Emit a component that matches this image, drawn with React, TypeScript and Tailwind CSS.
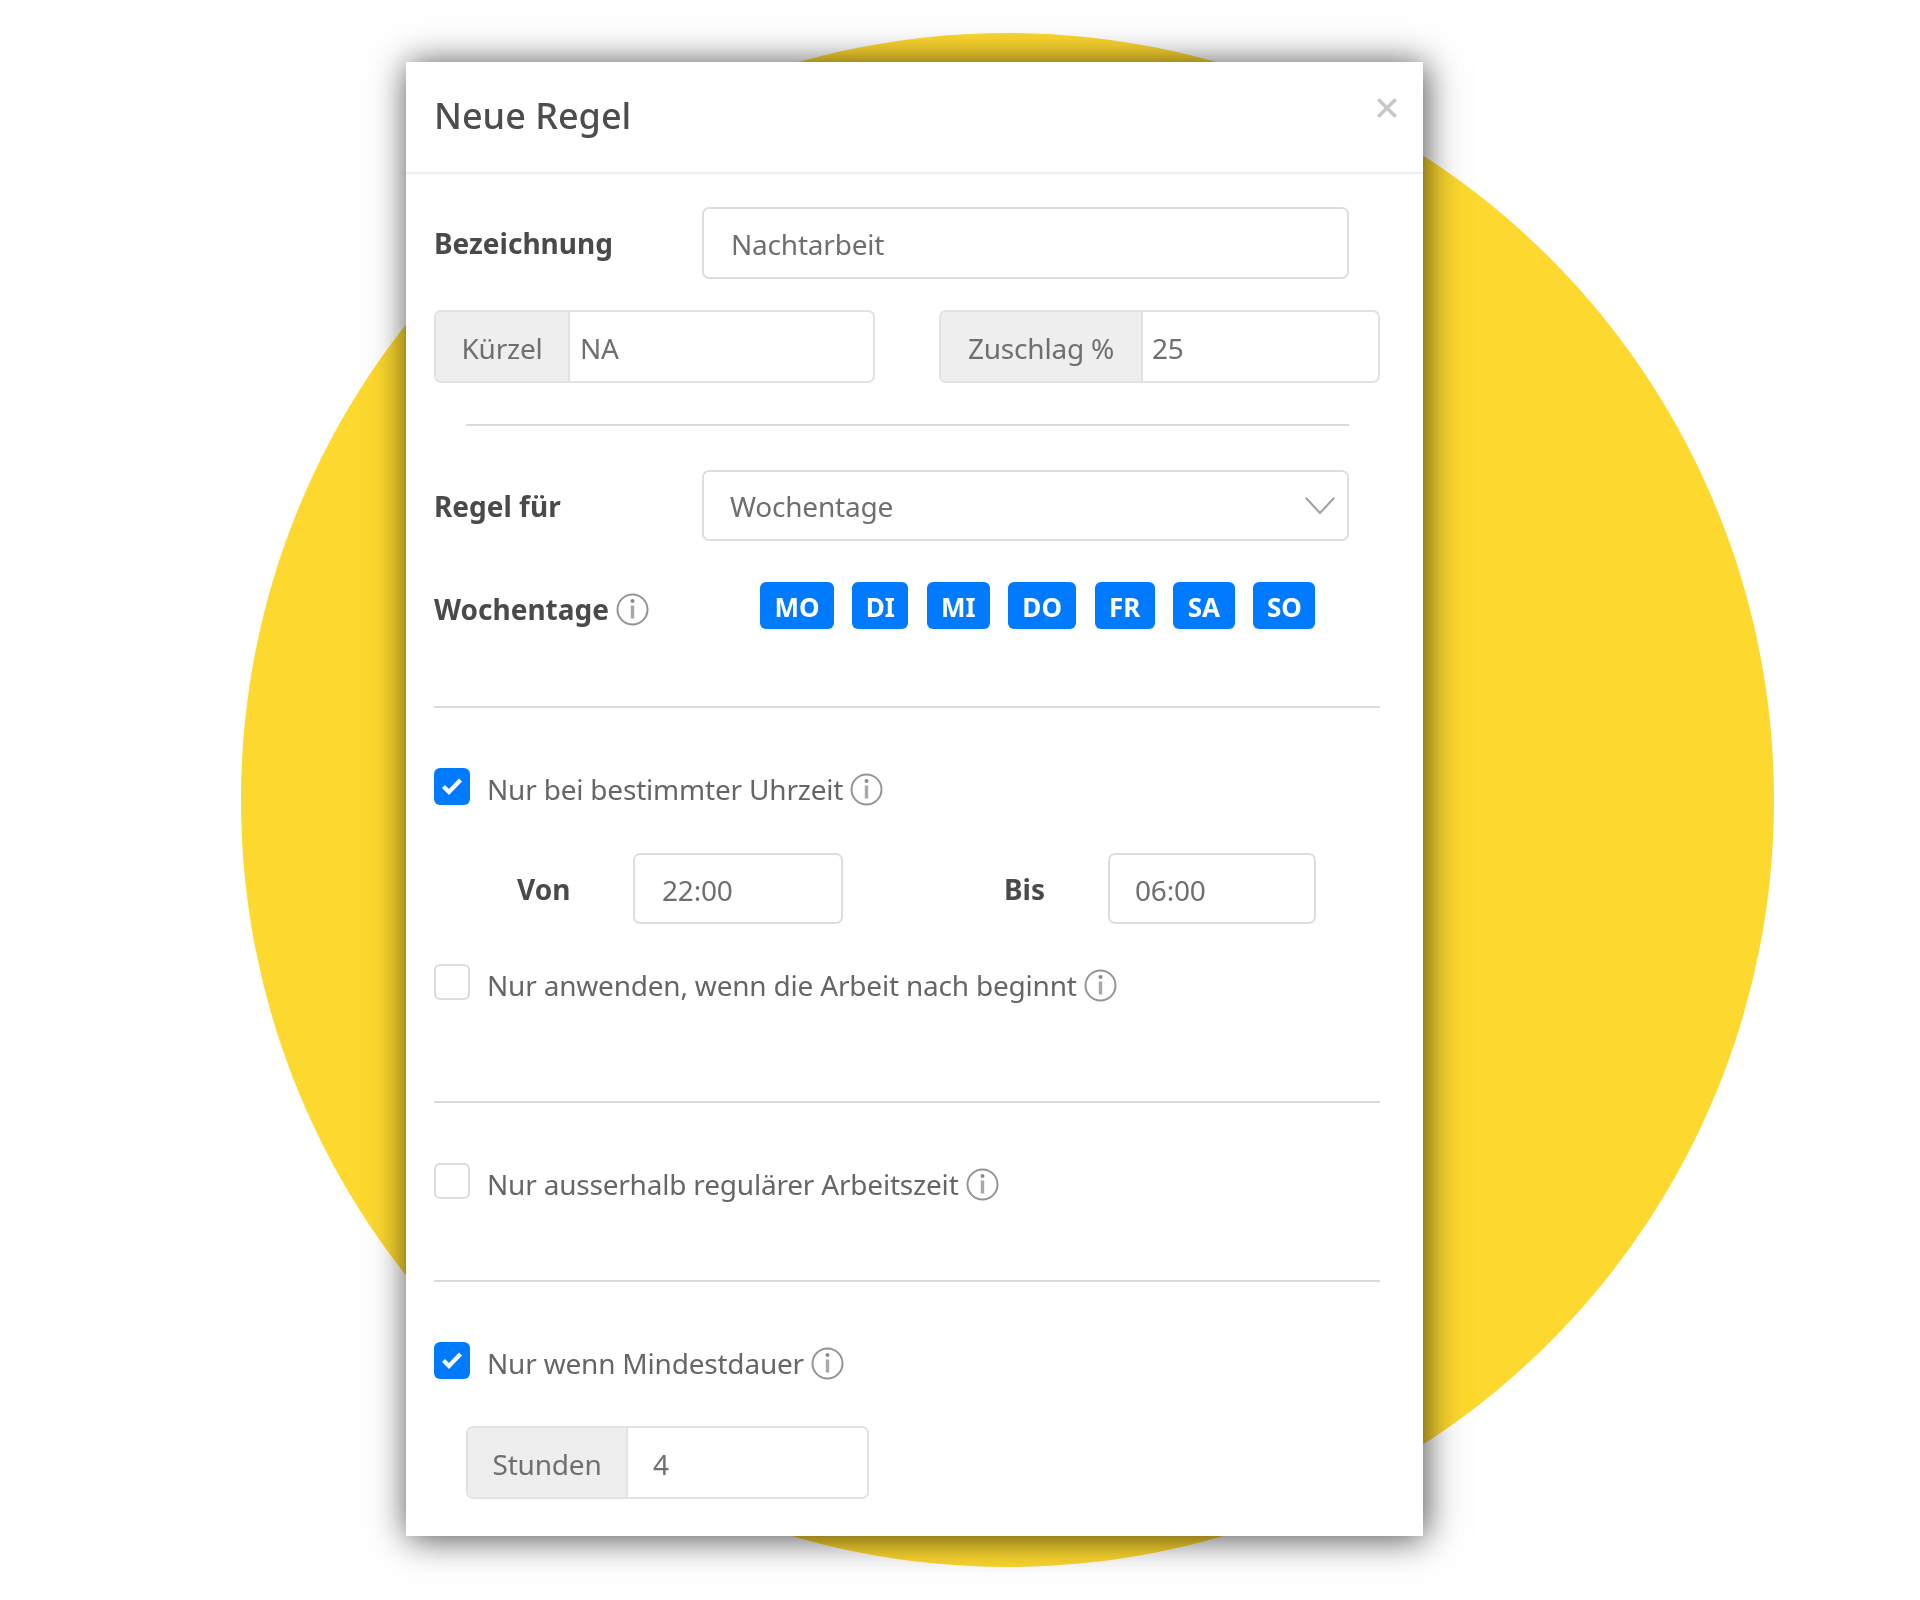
import type { ReactNode } from 'react';

const days = [
  { label: 'MO', width: 'w-[74px]' },
  { label: 'DI', width: 'w-[56px]' },
  { label: 'MI', width: 'w-[63px]' },
  { label: 'DO', width: 'w-[68px]' },
  { label: 'FR', width: 'w-[60px]' },
  { label: 'SA', width: 'w-[62px]' },
  { label: 'SO', width: 'w-[62px]' },
];

function InfoIcon() {
  return (
    <svg viewBox="0 0 33 33" className="w-[33px] h-[33px] shrink-0 ml-[7px]" fill="none" stroke="#949494">
      <circle cx="16.5" cy="16.5" r="15" strokeWidth="2" />
      <circle cx="16.5" cy="8" r="2" fill="#8a8a8a" stroke="none" />
      <path d="M16.5 12.5v13" strokeWidth="3.4" stroke="#a8a8a8" />
    </svg>
  );
}

function Check({ on, label }: { on?: boolean; label: string }) {
  return (
    <div className="flex items-center h-[36px]">
      {on ? (
        <div className="w-[36px] h-[37px] rounded-[6px] bg-[#007bff] flex items-center justify-center">
          <svg viewBox="0 0 22 22" className="w-[22px] h-[22px]" fill="none" stroke="#fff" strokeWidth="4.2">
            <path d="M2.5 11.5l5.5 5.5L19.5 5" />
          </svg>
        </div>
      ) : (
        <div className="w-[36px] h-[36px] rounded-[6px] border-2 border-[#dcdcdc] bg-white" />
      )}
      <span className="ml-[17px] text-[28px] tracking-[-0.2px] text-[#666] relative top-[3px]">{label}</span>
      <span className="relative top-[3px]">
        <InfoIcon />
      </span>
    </div>
  );
}

function Field({ children, className }: { children: ReactNode; className: string }) {
  return (
    <div className={`flex items-center rounded-[7px] border-2 border-[#dedede] text-[28px] tracking-[-0.2px] text-[#6f6f6f] ${className}`}>
      {children}
    </div>
  );
}

function Group({ addon, value, className, addonWidth, valuePad }: { addon: string; value: string; className: string; addonWidth: string; valuePad: string }) {
  return (
    <div className={`flex rounded-[7px] border-2 border-[#e2e2e2] text-[28px] tracking-[-0.2px] text-[#6f6f6f] overflow-hidden ${className}`}>
      <div className={`flex items-center justify-center pt-[3px] bg-[#eeeeee] border-r-2 border-[#e2e2e2] ${addonWidth}`}>{addon}</div>
      <div className={`flex items-center pt-[3px] ${valuePad}`}>{value}</div>
    </div>
  );
}

function Divider({ className }: { className: string }) {
  return <div className={`h-[2px] bg-[#dadada] ${className}`} />;
}

export default function App() {
  return (
    <div className="relative w-full h-[1600px] bg-white overflow-hidden font-['Noto_Sans',sans-serif] pt-[62px] pl-[406px]">
      <div className="absolute left-[241px] top-[33px] w-[1533px] h-[1534px] rounded-full bg-[#fdd82e]" />

      <div className="relative w-[1017px] h-[1474px] bg-white shadow-[2px_2px_34px_rgba(0,0,0,0.72)]">
        <div className="relative h-[112px] border-b-2 border-[#efefef] px-[28px] flex items-center">
          <h2 className="text-[36px] font-medium text-[#4d4d4d] relative top-[-1px] blur-[0.7px]">Neue Regel</h2>
          <svg viewBox="0 0 20 20" className="absolute right-[25px] top-[35px] w-[22px] h-[22px] blur-[0.7px]" stroke="#c9c9c9" strokeWidth="3.4">
            <path d="M2 2l16 16M18 2L2 18" />
          </svg>
        </div>

        <div className="pl-[28px] pt-[33px] blur-[0.7px]">
          <div className="flex items-center">
            <label className="w-[268px] text-[28px] font-bold text-[#4a4a4a]">Bezeichnung</label>
            <Field className="w-[647px] h-[72px] pl-[27px] pt-[2px]">Nachtarbeit</Field>
          </div>

          <div className="flex mt-[31px] gap-[64px]">
            <Group addon="Kürzel" value="NA" className="w-[441px] h-[73px]" addonWidth="w-[134px]" valuePad="pl-[10px]" />
            <Group addon="Zuschlag %" value="25" className="w-[441px] h-[73px]" addonWidth="w-[202px]" valuePad="pl-[9px]" />
          </div>

          <Divider className="w-[883px] ml-[32px] mt-[41px]" />

          <div className="flex items-center mt-[44px]">
            <label className="w-[268px] text-[28px] font-bold text-[#4a4a4a]">Regel für</label>
            <Field className="w-[647px] h-[71px] pl-[26px] pr-[12px] justify-between">
              <span className="pt-[1px]">Wochentage</span>
              <svg viewBox="0 0 30 18" className="w-[30px] h-[18px]" fill="none" stroke="#a0a0a0" strokeWidth="2">
                <path d="M1 1l14 15L29 1" />
              </svg>
            </Field>
          </div>

          <div className="flex items-start mt-[41px]">
            <div className="w-[326px] flex items-center text-[28px] font-bold text-[#4a4a4a] pt-[6px]">
              <span>Wochentage</span>
              <InfoIcon />
            </div>
            <div className="flex gap-[18.4px]">
              {days.map((day) => (
                <div key={day.label} className={`h-[47px] pt-[3px] rounded-[6px] bg-[#007bff] text-white text-[26px] font-bold flex items-center justify-center ${day.width}`}>
                  {day.label}
                </div>
              ))}
            </div>
          </div>

          <Divider className="w-[946px] mt-[76px]" />

          <div className="mt-[60px]">
            <Check on label="Nur bei bestimmter Uhrzeit" />
          </div>

          <div className="flex items-center mt-[49px] pl-[83px]">
            <label className="w-[116px] text-[28px] font-bold text-[#4a4a4a]">Von</label>
            <Field className="w-[210px] h-[71px] pl-[27px] pt-[2px]">22:00</Field>
            <label className="w-[104px] ml-[161px] text-[28px] font-bold text-[#4a4a4a]">Bis</label>
            <Field className="w-[208px] h-[71px] pl-[25px] pt-[2px]">06:00</Field>
          </div>

          <div className="mt-[40px]">
            <Check label="Nur anwenden, wenn die Arbeit nach beginnt" />
          </div>

          <Divider className="w-[946px] mt-[101px]" />

          <div className="mt-[60px]">
            <Check label="Nur ausserhalb regulärer Arbeitszeit" />
          </div>

          <Divider className="w-[946px] mt-[81px]" />

          <div className="mt-[60px]">
            <Check on label="Nur wenn Mindestdauer" />
          </div>

          <Group addon="Stunden" value="4" className="w-[403px] h-[73px] ml-[32px] mt-[48px]" addonWidth="w-[160px]" valuePad="pl-[25px]" />
        </div>
      </div>
    </div>
  );
}
